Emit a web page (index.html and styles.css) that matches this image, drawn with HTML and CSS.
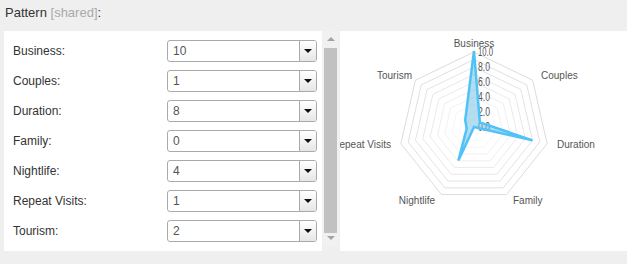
FILE: index.html
```html
<!DOCTYPE html>
<html>
<head>
<meta charset="UTF-8">
<link rel="stylesheet" href="styles.css">
</head>
<body>

<div class="pattern-title">Pattern <span class="shared">[shared]</span>:</div>

<div class="pattern-box">
  <div class="field-list">
    <div class="field-row">
      <div class="field-label">Business:</div>
      <div class="combo"><span class="combo-value">10</span><span class="combo-btn"><i class="caret"></i></span></div>
    </div>
    <div class="field-row">
      <div class="field-label">Couples:</div>
      <div class="combo"><span class="combo-value">1</span><span class="combo-btn"><i class="caret"></i></span></div>
    </div>
    <div class="field-row">
      <div class="field-label">Duration:</div>
      <div class="combo"><span class="combo-value">8</span><span class="combo-btn"><i class="caret"></i></span></div>
    </div>
    <div class="field-row">
      <div class="field-label">Family:</div>
      <div class="combo"><span class="combo-value">0</span><span class="combo-btn"><i class="caret"></i></span></div>
    </div>
    <div class="field-row">
      <div class="field-label">Nightlife:</div>
      <div class="combo"><span class="combo-value">4</span><span class="combo-btn"><i class="caret"></i></span></div>
    </div>
    <div class="field-row">
      <div class="field-label">Repeat Visits:</div>
      <div class="combo"><span class="combo-value">1</span><span class="combo-btn"><i class="caret"></i></span></div>
    </div>
    <div class="field-row">
      <div class="field-label">Tourism:</div>
      <div class="combo"><span class="combo-value">2</span><span class="combo-btn"><i class="caret"></i></span></div>
    </div>
  </div>

  <div class="scroller">
    <i class="arrow-up"></i>
    <div class="thumb"></div>
    <i class="arrow-down"></i>
  </div>

  <div class="chart-box">
    <svg class="radar" width="287" height="220" viewBox="0 0 287 220">
      <defs>
        <polygon id="ring" points="0,-75 58.64,-46.76 73.12,16.69 32.54,67.58 -32.54,67.58 -73.12,16.69 -58.64,-46.76"/>
      </defs>
      <g transform="translate(134 96)">
        <!-- grid rings, one per unit -->
        <g class="grid">
          <use href="#ring" transform="scale(1)"/>
          <use href="#ring" transform="scale(0.9)"/>
          <use href="#ring" transform="scale(0.8)"/>
          <use href="#ring" transform="scale(0.7)"/>
          <use href="#ring" transform="scale(0.6)"/>
          <use href="#ring" transform="scale(0.5)"/>
          <use href="#ring" transform="scale(0.4)"/>
          <use href="#ring" transform="scale(0.3)"/>
          <use href="#ring" transform="scale(0.2)"/>
          <use href="#ring" transform="scale(0.1)"/>
        </g>

        <g class="ticks">
          <text x="4" y="-71" textLength="15" lengthAdjust="spacingAndGlyphs">10.0</text>
          <text x="4" y="-56" textLength="12" lengthAdjust="spacingAndGlyphs">8.0</text>
          <text x="4" y="-41" textLength="12" lengthAdjust="spacingAndGlyphs">6.0</text>
          <text x="4" y="-26" textLength="12" lengthAdjust="spacingAndGlyphs">4.0</text>
          <text x="4" y="-11" textLength="12" lengthAdjust="spacingAndGlyphs">2.0</text>
          <text x="4" y="4" textLength="12" lengthAdjust="spacingAndGlyphs">0.0</text>
        </g>

        <polygon class="data" points="0,-76 5.86,-4.68 58.49,13.35 0,0 -15.6,33.5 -7.31,1.67 -8.8,-7.01"/>
      </g>

      <g class="axis-labels">
        <text x="134" y="16" text-anchor="middle">Business</text>
        <text x="201" y="47.5">Couples</text>
        <text x="217" y="116.5">Duration</text>
        <text x="173" y="172.5">Family</text>
        <text x="95" y="172.5" text-anchor="end">Nightlife</text>
        <text x="51" y="116.5" text-anchor="end">Repeat Visits</text>
        <text x="72" y="47.5" text-anchor="end">Tourism</text>
      </g>
    </svg>
  </div>
</div>

</body>
</html>
```

FILE: styles.css
```css
* {
  padding: 0;
  margin: 0;
  box-sizing: border-box;
}

body {
  width: 627px;
  height: 264px;
  background: #efefef;
  font-family: "Liberation Sans", Arial, sans-serif;
  color: #333;
  overflow: hidden;
}

.pattern-title {
  height: 31px;
  padding: 5px 0 0 5px;
  font-size: 13px;
  line-height: 15px;
}

.shared {
  color: #aaa;
}

.pattern-box {
  display: flex;
  height: 220px;
  padding-left: 4px;
}

/* form column */
.field-list {
  width: 318px;
  background: #fff;
  padding: 9px 0 0 9px;
}

.field-row {
  display: flex;
  align-items: center;
  height: 22px;
  margin-bottom: 8px;
}

.field-label {
  width: 154px;
  font-size: 12px;
}

.combo {
  display: flex;
  width: 150px;
  height: 22px;
  border: 1px solid #aaa;
  border-radius: 3px;
  background: #fff;
  overflow: hidden;
}

.combo-value {
  flex: 1;
  padding-left: 5px;
  font-size: 12px;
  line-height: 20px;
  color: #555;
}

.combo-btn {
  width: 17px;
  border-left: 1px solid #aaa;
  background: linear-gradient(#fff, #e6e6e6);
  display: flex;
  align-items: center;
  justify-content: center;
}

.caret {
  width: 0;
  height: 0;
  border-left: 4px solid transparent;
  border-right: 4px solid transparent;
  border-top: 4px solid #111;
}

/* fake scrollbar */
.scroller {
  width: 17px;
  height: 215px;
  background: #f1f1f1;
  display: flex;
  flex-direction: column;
  align-items: center;
  padding-top: 6px;
}

.arrow-up,
.arrow-down {
  width: 0;
  height: 0;
  border-left: 4px solid transparent;
  border-right: 4px solid transparent;
}

.arrow-up {
  border-bottom: 4px solid #a3a3a3;
}

.arrow-down {
  border-top: 4px solid #a3a3a3;
  margin-top: 3px;
}

.thumb {
  width: 13px;
  height: 185px;
  margin-top: 7px;
  background: #c1c1c1;
}

/* chart */
.chart-box {
  flex: 1;
  margin-left: 1px;
  background: #fff;
  overflow: hidden;
}

.radar {
  display: block;
}

.grid use {
  fill: none;
  stroke: #dcdcdc;
  stroke-width: 1;
  vector-effect: non-scaling-stroke;
}

.ticks text {
  font-size: 12.5px;
  fill: #555;
}

.data {
  fill: rgba(90, 180, 225, 0.45);
  stroke: #4fc3f7;
  stroke-width: 2.5;
  stroke-linejoin: miter;
}

.axis-labels text {
  font-size: 10px;
  fill: #555;
}
```
